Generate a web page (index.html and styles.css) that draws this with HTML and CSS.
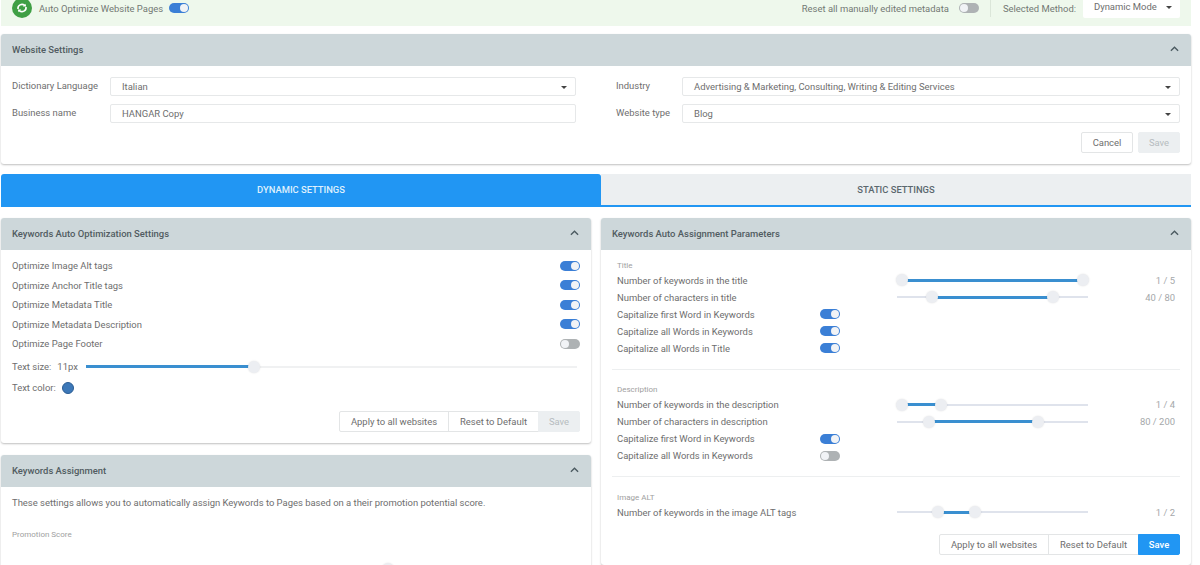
FILE: index.html
```html
<!DOCTYPE html>
<html lang="en">
<head>
    <meta charset="UTF-8">
    <title>Website Settings</title>
    <link rel="stylesheet" href="styles.css">
</head>
<body>
    <div class="page">
        <div class="topbar">
            <span class="logo">
                <svg viewBox="0 0 20 20" width="20" height="20">
                    <circle cx="10" cy="10" r="10" fill="#3f9f45"/>
                    <path d="M6 11a4 4 0 0 1 6.6-3.6M14 9a4 4 0 0 1-6.6 3.6" fill="none" stroke="#fff" stroke-width="1.6"/>
                    <path d="M14.2 8.4h-3.4l2.6-2.6zM5.8 11.6h3.4l-2.6 2.6z" fill="#fff"/>
                </svg>
            </span>
            <span class="topbar-label">Auto Optimize Website Pages</span>
            <span class="toggle on"></span>
            <span class="topbar-right">
                <span class="topbar-label">Reset all manually edited metadata</span>
                <span class="toggle off"></span>
                <span class="topbar-sep"></span>
                <span class="topbar-label">Selected Method:</span>
                <span class="method-select">Dynamic Mode<i class="caret"></i></span>
            </span>
        </div>

        <section class="panel website-panel">
            <div class="panel-header">
                <span>Website Settings</span>
                <svg class="chevron" viewBox="0 0 10 6"><path d="M1 5l4-4 4 4" fill="none" stroke="#4b5a60" stroke-width="1.5"/></svg>
            </div>
            <div class="website-body">
                <div class="website-grid">
                    <label class="field-label">Dictionary Language</label>
                    <div class="select">Italian<i class="caret"></i></div>
                    <label class="field-label">Industry</label>
                    <div class="select">Advertising &amp; Marketing, Consulting, Writing &amp; Editing Services<i class="caret"></i></div>
                    <label class="field-label">Business name</label>
                    <div class="select">HANGAR Copy</div>
                    <label class="field-label">Website type</label>
                    <div class="select">Blog<i class="caret"></i></div>
                </div>
                <div class="website-actions">
                    <button class="btn cancel-btn">Cancel</button>
                    <button class="btn btn-disabled save-small">Save</button>
                </div>
            </div>
        </section>

        <div class="tabs">
            <div class="tab tab-active">DYNAMIC SETTINGS</div>
            <div class="tab">STATIC SETTINGS</div>
        </div>

        <div class="columns">
            <div class="column">
                <section class="panel">
                    <div class="panel-header">
                        <span>Keywords Auto Optimization Settings</span>
                        <svg class="chevron" viewBox="0 0 10 6"><path d="M1 5l4-4 4 4" fill="none" stroke="#4b5a60" stroke-width="1.5"/></svg>
                    </div>
                    <div class="optimize-body">
                        <div class="opt-row"><span>Optimize Image Alt tags</span><span class="toggle on"></span></div>
                        <div class="opt-row"><span>Optimize Anchor Title tags</span><span class="toggle on"></span></div>
                        <div class="opt-row"><span>Optimize Metadata Title</span><span class="toggle on"></span></div>
                        <div class="opt-row"><span>Optimize Metadata Description</span><span class="toggle on"></span></div>
                        <div class="opt-row"><span>Optimize Page Footer</span><span class="toggle off"></span></div>
                        <div class="size-row">
                            <span>Text size:</span>
                            <span class="size-value">11px</span>
                            <div class="slider flat">
                                <div class="slider-fill" style="left: 0; width: 34.3%"></div>
                                <span class="thumb" style="left: 34.3%"></span>
                            </div>
                        </div>
                        <div class="color-row"><span>Text color:</span><span class="color-dot"></span></div>
                        <div class="btn-group">
                            <button class="btn">Apply to all websites</button>
                            <button class="btn">Reset to Default</button>
                            <button class="btn btn-disabled">Save</button>
                        </div>
                    </div>
                </section>

                <section class="panel assign-panel">
                    <div class="panel-header">
                        <span>Keywords Assignment</span>
                        <svg class="chevron" viewBox="0 0 10 6"><path d="M1 5l4-4 4 4" fill="none" stroke="#4b5a60" stroke-width="1.5"/></svg>
                    </div>
                    <div class="assign-body">
                        <p>These settings allows you to automatically assign Keywords to Pages based on a their promotion potential score.</p>
                        <div class="small-title">Promotion Score</div>
                        <div class="slider flat score-slider">
                            <span class="thumb" style="left: 66.2%"></span>
                        </div>
                    </div>
                </section>
            </div>

            <div class="column">
                <section class="panel">
                    <div class="panel-header">
                        <span>Keywords Auto Assignment Parameters</span>
                        <svg class="chevron" viewBox="0 0 10 6"><path d="M1 5l4-4 4 4" fill="none" stroke="#4b5a60" stroke-width="1.5"/></svg>
                    </div>
                    <div class="params-body">
                        <div class="params-group">
                            <div class="small-title">Title</div>
                            <div class="param-row">
                                <span class="param-wide">Number of keywords in the title</span>
                                <div class="slider"><div class="slider-fill" style="left: 2.6%; width: 95%"></div><span class="thumb" style="left: 2.6%"></span><span class="thumb" style="left: 97.6%"></span></div>
                                <span class="param-value">1 / 5</span>
                            </div>
                            <div class="param-row">
                                <span class="param-wide">Number of characters in title</span>
                                <div class="slider"><div class="slider-fill" style="left: 18.3%; width: 63.4%"></div><span class="thumb" style="left: 18.3%"></span><span class="thumb" style="left: 81.7%"></span></div>
                                <span class="param-value">40 / 80</span>
                            </div>
                            <div class="param-row"><span>Capitalize first Word in Keywords</span><span class="toggle on"></span></div>
                            <div class="param-row"><span>Capitalize all Words in Keywords</span><span class="toggle on"></span></div>
                            <div class="param-row"><span>Capitalize all Words in Title</span><span class="toggle on"></span></div>
                        </div>
                        <div class="params-group">
                            <div class="small-title">Description</div>
                            <div class="param-row">
                                <span class="param-wide">Number of keywords in the description</span>
                                <div class="slider"><div class="slider-fill" style="left: 2.6%; width: 20.4%"></div><span class="thumb" style="left: 2.6%"></span><span class="thumb" style="left: 23%"></span></div>
                                <span class="param-value">1 / 4</span>
                            </div>
                            <div class="param-row">
                                <span class="param-wide">Number of characters in description</span>
                                <div class="slider"><div class="slider-fill" style="left: 16.8%; width: 57.1%"></div><span class="thumb" style="left: 16.8%"></span><span class="thumb" style="left: 73.9%"></span></div>
                                <span class="param-value">80 / 200</span>
                            </div>
                            <div class="param-row"><span>Capitalize first Word in Keywords</span><span class="toggle on"></span></div>
                            <div class="param-row"><span>Capitalize all Words in Keywords</span><span class="toggle off"></span></div>
                        </div>
                        <div class="params-group last">
                            <div class="small-title">Image ALT</div>
                            <div class="param-row">
                                <span class="param-wide">Number of keywords in the image ALT tags</span>
                                <div class="slider"><div class="slider-fill" style="left: 21.5%; width: 19.4%"></div><span class="thumb" style="left: 21.5%"></span><span class="thumb" style="left: 40.9%"></span></div>
                                <span class="param-value">1 / 2</span>
                            </div>
                        </div>
                        <div class="btn-group">
                            <button class="btn">Apply to all websites</button>
                            <button class="btn">Reset to Default</button>
                            <button class="btn btn-primary">Save</button>
                        </div>
                    </div>
                </section>
            </div>
        </div>
    </div>
</body>
</html>
```

FILE: styles.css
```css
html, body {
    height: 565px;
    overflow: hidden;
}

body {
    font-family: Roboto, 'Liberation Sans', sans-serif;
    font-size: 9.45px;
    margin: 0;
    padding: 0 9px 0 1px;
    background: #fff;
    color: #6e6e6e;
}

.page {
    margin-top: -10px;
}

.topbar {
    height: 36px;
    display: flex;
    align-items: center;
    padding: 0 11px 0 11px;
    background: #eef8ec;
    box-sizing: border-box;
}

.logo {
    width: 20px;
    height: 20px;
    margin-right: 7px;
}

.topbar-label {
    color: #737874;
    white-space: nowrap;
    margin-top: 1px;
}

.topbar .toggle {
    margin-left: 6px;
}

.topbar-right {
    margin-left: auto;
    display: flex;
    align-items: center;
}

.topbar-right .toggle {
    margin-left: 10px;
}

.topbar-sep {
    width: 1px;
    height: 18px;
    margin: 0 12px 0 11px;
    background: #dbe6d9;
}

.method-select {
    position: relative;
    width: 97px;
    height: 20px;
    line-height: 18px;
    margin-left: 7px;
    padding-left: 11px;
    background: #fff;
    border-radius: 2px;
    box-sizing: border-box;
}

.caret {
    position: absolute;
    right: 8px;
    top: 8px;
    border-left: 3px solid transparent;
    border-right: 3px solid transparent;
    border-top: 3px solid #444;
}

.toggle {
    position: relative;
    display: inline-block;
    width: 20px;
    height: 10px;
    border-radius: 5px;
    flex: none;
}

.toggle::after {
    content: "";
    position: absolute;
    top: 1px;
    width: 8px;
    height: 8px;
    border-radius: 50%;
    background: #f1f3f6;
}

.toggle.on {
    background: #3b7fd6;
}

.toggle.on::after {
    right: 1px;
}

.toggle.off {
    background: #aeb2b4;
}

.toggle.off::after {
    left: 1px;
}

.panel {
    background: #fff;
    border-radius: 3px;
    box-shadow: 0 1px 2px rgba(0, 0, 0, 0.25);
}

.panel-header {
    height: 32px;
    display: flex;
    align-items: center;
    justify-content: space-between;
    padding: 0 12px 1px 11px;
    background: #cdd7da;
    border-radius: 3px 3px 0 0;
    box-sizing: border-box;
    color: #515c61;
    font-weight: 500;
}

.chevron {
    width: 9px;
    height: 6px;
    margin-top: -1px;
}

.website-panel {
    margin-top: 8px;
}

.website-body {
    height: 98px;
    padding: 11px 11px 0;
    box-sizing: border-box;
}

.website-grid {
    display: grid;
    grid-template-columns: 98px 466px 106px 498px;
    row-gap: 8px;
    grid-auto-rows: 19px;
    align-items: center;
}

.field-label {
    margin-top: -2px;
}

.website-grid .field-label:nth-child(3),
.website-grid .field-label:nth-child(7) {
    padding-left: 40px;
}

.select {
    position: relative;
    height: 19px;
    line-height: 17px;
    padding-left: 11px;
    background: #fff;
    border: 1px solid #e6e8e9;
    box-sizing: border-box;
    border-radius: 2px;
}

.website-actions {
    display: flex;
    justify-content: flex-end;
    gap: 5px;
    margin-top: 9px;
}

.btn {
    font-family: inherit;
    font-size: 9.45px;
    height: 21px;
    padding: 0;
    color: #6e6e6e;
    background: #fff;
    border: 1px solid #e3e5e6;
    box-sizing: border-box;
    border-radius: 2px;
}

.cancel-btn {
    width: 52px;
}

.save-small {
    width: 42px;
}

.btn-disabled {
    background: #eceff1;
    border-color: #eceff1;
    color: #b6bcbf;
}

.btn-primary {
    background: #2196f3;
    border-color: #2196f3;
    color: #fff;
    font-weight: 500;
}

.tabs {
    display: flex;
    margin-top: 10px;
    height: 33px;
}

.tab {
    flex: 0 0 590px;
    display: flex;
    align-items: center;
    justify-content: center;
    background: #eceff1;
    color: #5b676e;
    font-size: 9.4px;
    font-weight: 500;
    border-bottom: 2px solid #2196f3;
    box-sizing: border-box;
}

.tab-active {
    flex-basis: 600px;
    background: #2196f3;
    color: #dff0fd;
    border-radius: 3px 3px 0 0;
}

.columns {
    display: flex;
    gap: 10px;
    margin-top: 11px;
}

.column {
    flex: 0 0 590px;
}

.optimize-body {
    padding: 6px 11px 11px;
}

.opt-row {
    height: 19.5px;
    display: flex;
    align-items: center;
    justify-content: space-between;
}

.size-row {
    height: 20px;
    margin-top: 3px;
    display: flex;
    align-items: center;
}

.size-value {
    margin: 0 8px 0 6px;
}

.slider {
    position: relative;
    height: 2px;
    background: #dfe3ec;
    flex: 1;
}

.slider.flat {
    background: #f0f1f2;
}

.size-row .slider {
    margin-right: 3px;
}

.slider-fill {
    position: absolute;
    top: -0.5px;
    height: 3px;
    background: #3a8fd0;
}

.thumb {
    position: absolute;
    top: -5px;
    width: 12px;
    height: 12px;
    margin-left: -6px;
    border-radius: 50%;
    background: #eceef2;
    box-shadow: 0 0 2px rgba(0, 0, 0, 0.12);
}

.color-row {
    height: 20px;
    margin-top: 1px;
    display: flex;
    align-items: center;
}

.color-dot {
    width: 10px;
    height: 10px;
    margin-left: 6px;
    border-radius: 50%;
    background: #3d78b8;
    border: 1px solid #2b5d94;
}

.btn-group {
    display: flex;
    justify-content: flex-end;
    margin-top: 13px;
}

.btn-group .btn {
    width: 91px;
    border-radius: 0;
    margin-left: -1px;
}

.btn-group .btn:first-child {
    width: 110px;
    border-radius: 2px 0 0 2px;
}

.btn-group .btn:last-child {
    width: 42px;
    border-radius: 0 2px 2px 0;
}

.assign-panel {
    margin-top: 12px;
}

.assign-body {
    padding: 10px 11px 40px;
}

.assign-body p {
    margin: 0;
    line-height: 12px;
}

.small-title {
    height: 12px;
    line-height: 12px;
    font-size: 8px;
    color: #a0a0a0;
}

.assign-body .small-title {
    margin-top: 20px;
}

.score-slider {
    margin-top: 27px;
}

.params-body {
    padding: 9.5px 11px 10px;
}

.params-group {
    padding: 0 0 12px 5px;
    margin-bottom: 14.5px;
    border-bottom: 1px solid #edeff0;
}

.params-group.last {
    border-bottom: 0;
    padding-bottom: 0;
    margin-bottom: 0;
}

.param-row {
    height: 17px;
    display: grid;
    grid-template-columns: 203px 77px 191px 1fr;
    align-items: center;
}

.param-wide {
    grid-column: 1 / 3;
}

.param-value {
    text-align: right;
    padding-right: 5px;
    color: #a5a8aa;
}

.params-body .btn-group {
    margin-top: 13.5px;
}
```
